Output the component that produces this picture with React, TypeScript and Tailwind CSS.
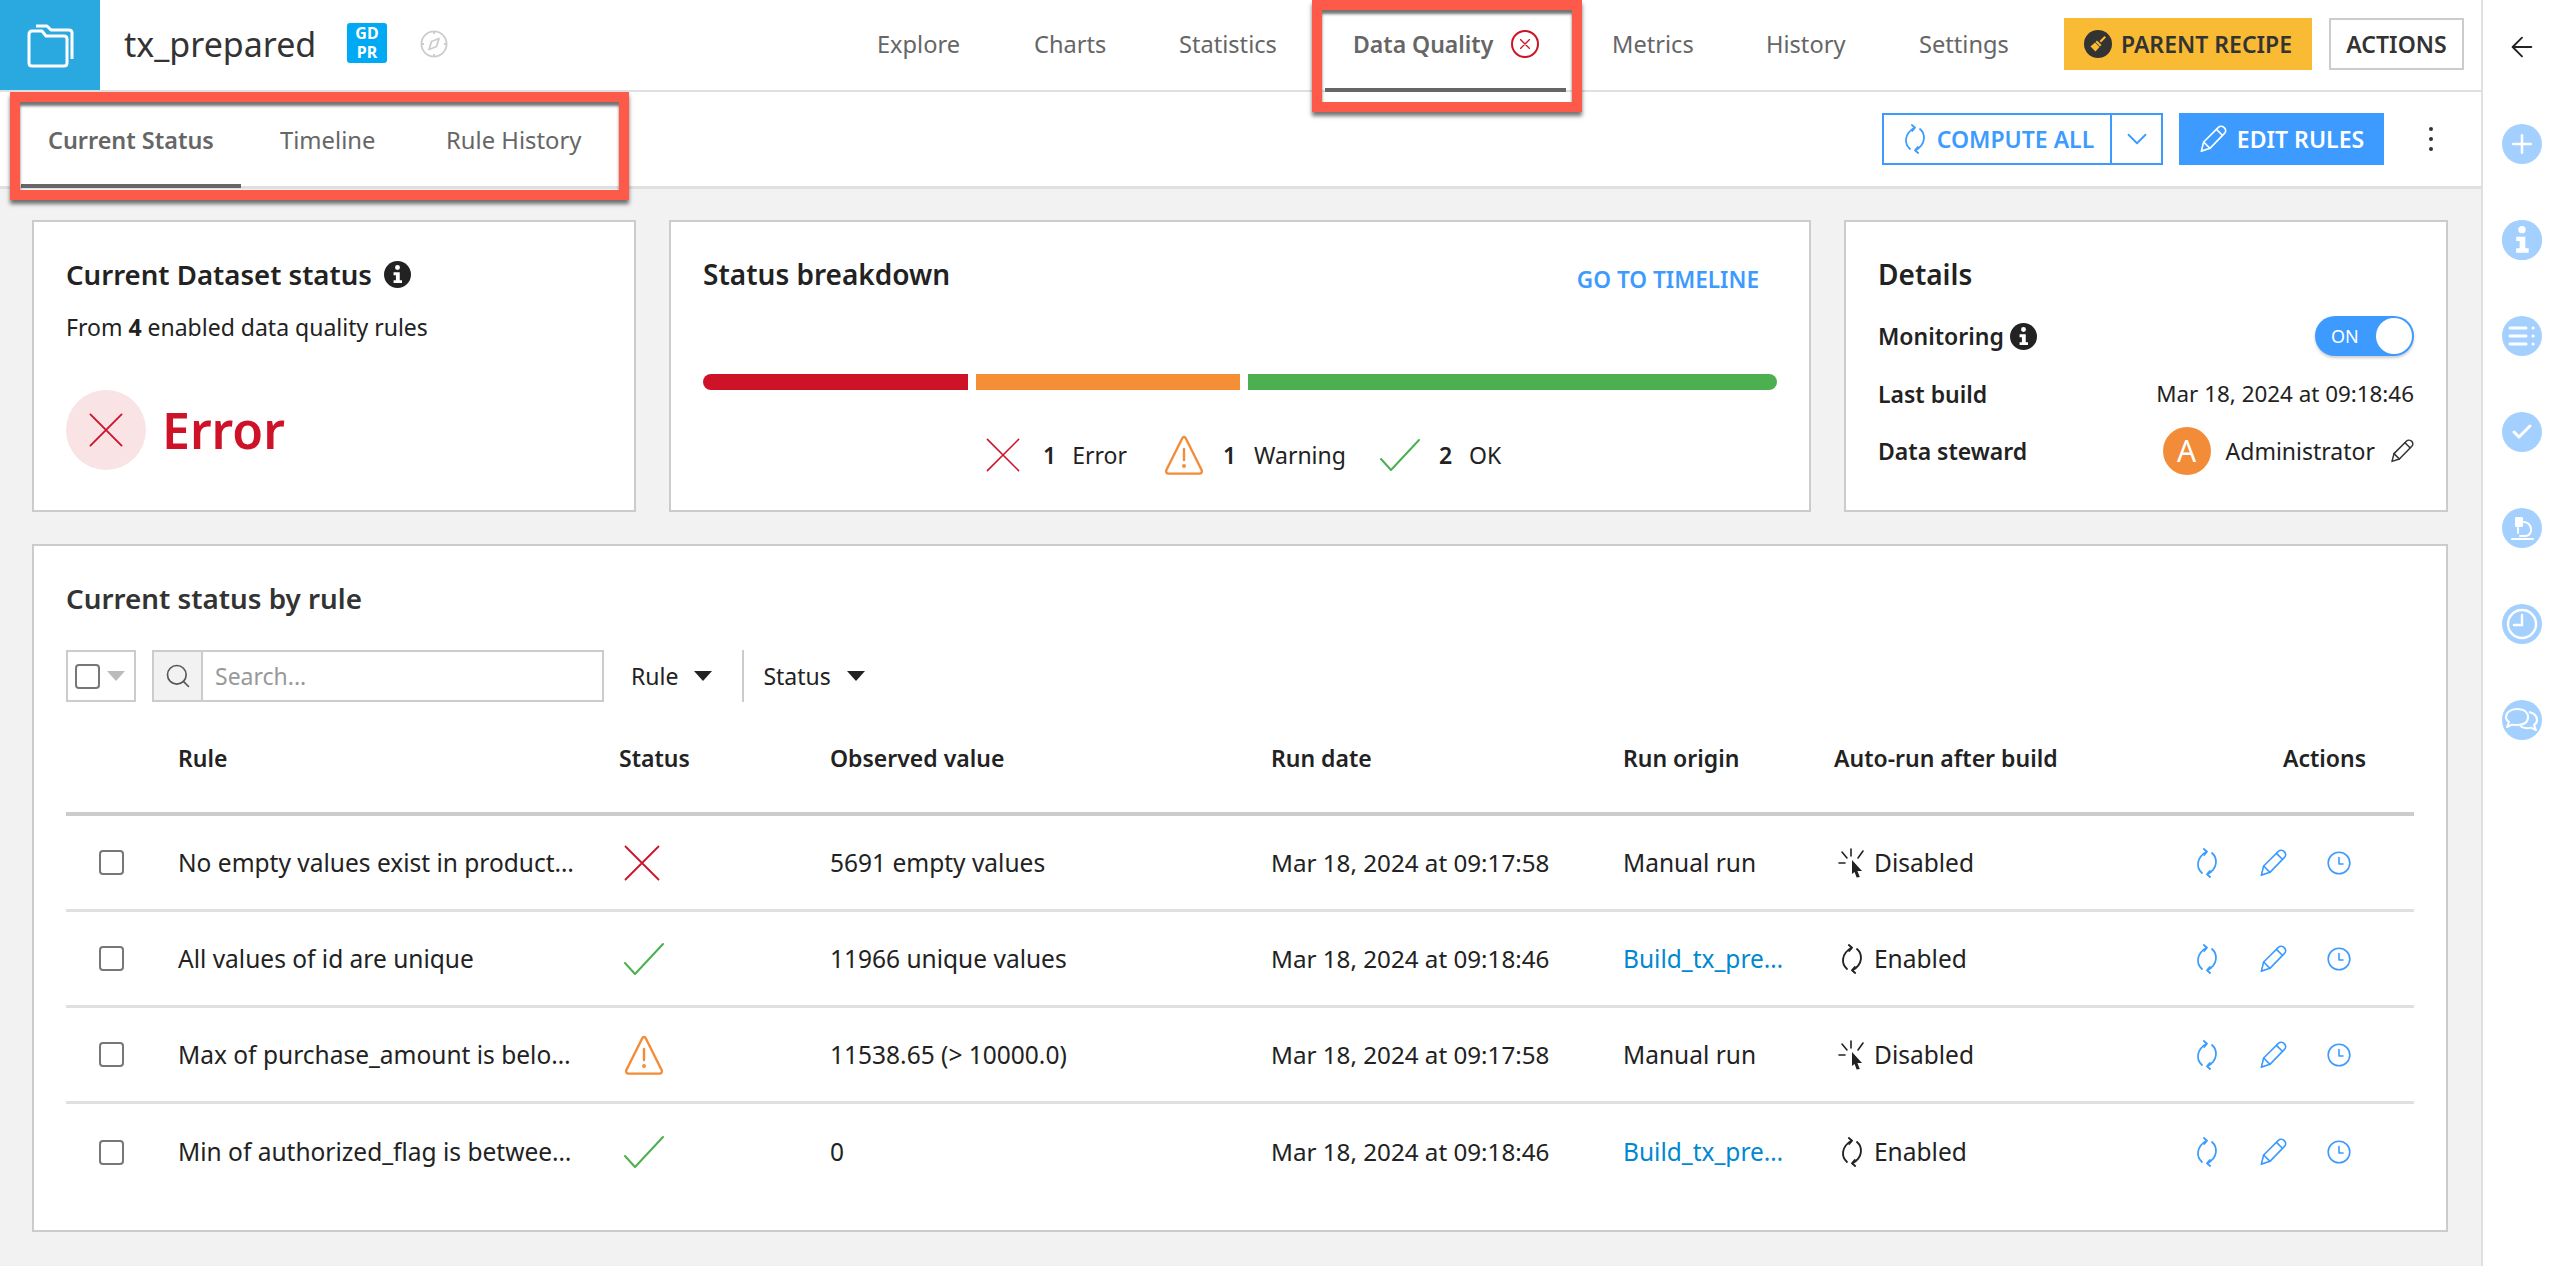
import { Plus, Check, Search, ChevronDown, ArrowLeft } from 'lucide-react';

const BLUE = '#3d9bff';

// Two arcs with arrow heads, used for compute / auto-run
function SyncIcon({ size = 32, color = BLUE, sw = 1.4 }: { size?: number; color?: string; sw?: number }) {
  return (
    <svg width={size * 0.8} height={size} viewBox="0 0 18 24" fill="none" stroke={color} strokeWidth={sw} strokeLinecap="round" strokeLinejoin="round">
      <path d="M5 20 C 0.5 16, 0 8, 8.5 3" />
      <path d="M6.5 0.8 L 9 3 L 6.8 5.6" />
      <path d="M13 4 C 17.5 8, 18 16, 9.5 21" />
      <path d="M11.5 23.2 L 9 21 L 11.2 18.4" />
    </svg>
  );
}

function PencilIcon({ size = 28, color = BLUE, sw = 1.4 }: { size?: number; color?: string; sw?: number }) {
  return (
    <svg width={size} height={size} viewBox="0 0 24 24" fill="none" stroke={color} strokeWidth={sw} strokeLinejoin="round" strokeLinecap="round">
      <path d="M2 22.4 L 4 14.6 L 16.6 2 C 18 0.8, 20.4 1, 21.8 2.4 C 23.2 3.8, 23.2 6, 21.8 7.2 L 9.4 20 Z" />
      <path d="M15 3.8 L 20 8.8" />
      <path d="M4 14.6 L 9.4 20" />
    </svg>
  );
}

function ClockIcon() {
  return (
    <svg width="24" height="24" viewBox="0 0 24 24" fill="none" stroke={BLUE} strokeWidth="1.6" strokeLinecap="round" strokeLinejoin="round">
      <circle cx="12" cy="12" r="10.8" />
      <path d="M12 6.5 V 13 H 16" />
    </svg>
  );
}

function CrossIcon({ size = 36, color = '#ce1329', sw = 1.3 }: { size?: number; color?: string; sw?: number }) {
  return (
    <svg width={size} height={size} viewBox="0 0 24 24" fill="none" stroke={color} strokeWidth={sw} strokeLinecap="round">
      <path d="M1 1 L 23 23 M 23 1 L 1 23" />
    </svg>
  );
}

function WarnIcon({ size = 40 }: { size?: number }) {
  return (
    <svg width={size} height={size} viewBox="0 0 40 40" fill="none" stroke="#f28c38" strokeWidth="2.4" strokeLinejoin="round" strokeLinecap="round">
      <path d="M20 2 C 21 2, 21.6 3, 22 3.8 L 37.6 35 C 38.4 37, 37.4 38.6, 35.4 38.6 H 4.6 C 2.6 38.6, 1.6 37, 2.4 35 L 18 3.8 C 18.4 3, 19 2, 20 2 Z" />
      <path d="M20 14 V 25" />
      <circle cx="20" cy="31" r="0.8" fill="#f28c38" />
    </svg>
  );
}

function TickIcon({ size = 40 }: { size?: number }) {
  return (
    <svg width={size} height={size} viewBox="0 0 40 40" fill="none" stroke="#4caf50" strokeWidth="2" strokeLinecap="round" strokeLinejoin="round">
      <path d="M1 24 L 11 35 L 39 5" />
    </svg>
  );
}

function InfoDot({ size = 27, bg = '#222', fg = '#fff' }: { size?: number; bg?: string; fg?: string }) {
  return (
    <svg width={size} height={size} viewBox="0 0 24 24">
      <circle cx="12" cy="12" r="12" fill={bg} />
      <circle cx="12" cy="5.8" r="2.2" fill={fg} />
      <path d="M8.5 10 H 14 V 17 H 16 V 19.6 H 8.5 V 17 H 10.6 V 12.6 H 8.5 Z" fill={fg} />
    </svg>
  );
}

function CursorClick() {
  return (
    <svg width="28" height="30" viewBox="0 0 28 30" fill="none" stroke="#222" strokeWidth="1.6" strokeLinecap="round">
      <path d="M13 1 V 8 M 4 4 L 9 10 M 25 3 L 20 10 M 1 15 H 7" />
      <path d="M14 12 L 24 23 H 19.4 L 21.8 29 L 18.6 29.6 L 16.6 24 L 14 26 Z" fill="#222" stroke="none" />
    </svg>
  );
}

function Caret({ color = '#222' }: { color?: string }) {
  return (
    <svg width="18" height="10" viewBox="0 0 18 10">
      <path d="M0 0 H 18 L 9 10 Z" fill={color} />
    </svg>
  );
}

function Checkbox() {
  return <span className="block w-[25px] h-[25px] rounded-[4px] border-2 border-[#777] bg-white" />;
}

function SideCircle({ children, mt }: { children: React.ReactNode; mt?: string }) {
  return (
    <div className={`w-10 h-10 rounded-full bg-[#a3d0ff] flex items-center justify-center text-white ${mt ?? ''}`}>
      {children}
    </div>
  );
}

const navItems = [
  { label: 'Explore', w: 'w-[157px]' },
  { label: 'Charts', w: 'w-[145px]' },
  { label: 'Statistics', w: 'w-[146px]' },
];
const navItemsRight = [
  { label: 'Metrics', w: 'w-[154px]' },
  { label: 'History', w: 'w-[153px]' },
  { label: 'Settings', w: 'w-[145px]' },
];

const rows = [
  { rule: 'No empty values exist in product…', status: 'error', value: '5691 empty values', date: 'Mar 18, 2024 at 09:17:58', origin: 'Manual run', auto: false },
  { rule: 'All values of id are unique', status: 'ok', value: '11966 unique values', date: 'Mar 18, 2024 at 09:18:46', origin: 'Build_tx_pre…', auto: true },
  { rule: 'Max of purchase_amount is belo…', status: 'warn', value: '11538.65 (> 10000.0)', date: 'Mar 18, 2024 at 09:17:58', origin: 'Manual run', auto: false },
  { rule: 'Min of authorized_flag is betwee…', status: 'ok', value: '0', date: 'Mar 18, 2024 at 09:18:46', origin: 'Build_tx_pre…', auto: true },
];

const gridCols = 'grid grid-cols-[112px_441px_211px_441px_352px_211px_1fr]';

export default function App() {
  return (
    <div className="relative flex h-screen w-full overflow-hidden bg-[#f2f2f2] font-['Noto_Sans',sans-serif] text-[#222] text-[24px] leading-[32px]">
      <div className="flex-1 min-w-0 flex flex-col">
        {/* Top bar */}
        <div className="h-[92px] shrink-0 bg-white border-b-2 border-[#e0e0e0] flex">
          <div className="w-[100px] h-[90px] bg-[#2aa9e0] flex items-center justify-center">
            <svg width="48" height="52" viewBox="0 0 48 52" fill="none" stroke="#fff" strokeWidth="3" strokeLinejoin="round">
              <path d="M3 16 C 3 13, 4 12, 6 12 H 16 L 20 17 H 38 C 40 17, 41 18, 41 20 V 44 C 41 46, 40 47, 38 47 H 6 C 4 47, 3 46, 3 44 Z" />
              <path d="M10 7 H 21 L 25 11 H 43 C 45 11, 46 12, 46 14 V 40" />
            </svg>
          </div>
          <div className="ml-[24px] w-[223px] text-[34px] leading-[88px] text-[#333]">tx_prepared</div>
          <div className="mt-[23px] w-10 h-10 rounded-[3px] bg-[#00a9f4] text-white text-[16px] leading-[19px] font-bold text-center flex flex-col justify-center">
            <span>GD</span>
            <span>PR</span>
          </div>
          <div className="ml-[33px] mt-[30px]">
            <svg width="28" height="28" viewBox="0 0 28 28" fill="none" stroke="#ccc" strokeWidth="1.8" strokeLinejoin="round">
              <circle cx="14" cy="14" r="12.6" />
              <path d="M9 19.5 L 11.5 11.5 L 19 8.5 L 16.5 16.5 Z" />
              <path d="M14 1 V 4 M 14 24 V 27 M 1 14 H 4 M 24 14 H 27" />
            </svg>
          </div>
          <div className="ml-[429px] flex text-[#666] text-[23.6px] leading-[88px]">
            {navItems.map(n => (
              <div key={n.label} className={n.w}>{n.label}</div>
            ))}
            <div className="relative w-[287px] h-[88px] pl-[28px] flex items-center font-semibold text-[23px]">
              <span>Data Quality</span>
              <span className="ml-[18px] w-[28px] h-[28px] rounded-full border-2 border-[#ce1329] flex items-center justify-center">
                <CrossIcon size={10} sw={3} />
              </span>
              <span className="absolute left-0 top-[88px] w-[241px] h-1 bg-[#666]" />
            </div>
            {navItemsRight.map(n => (
              <div key={n.label} className={n.w}>{n.label}</div>
            ))}
          </div>
          <div className="mt-[18px] w-[248px] h-[52px] bg-[#f9bb33] flex items-center justify-center gap-[9px] text-[#333] font-semibold text-[23px]">
            <span className="w-[28px] h-[28px] rounded-full bg-[#333] flex items-center justify-center">
              <svg width="18" height="18" viewBox="0 0 18 18" fill="#f9bb33">
                <path d="M10.5 6 L 15.5 1 L 17 2.5 L 12 7.5 Z" />
                <path d="M8 5.5 L 12.5 10 L 11 11.5 L 6.5 7 Z" />
                <path d="M6 7.5 L 10.5 12 L 6.5 16.5 L 1.5 11.5 Z" />
              </svg>
            </span>
            PARENT RECIPE
          </div>
          <div className="ml-[17px] mt-[18px] w-[135px] h-[52px] border-2 border-[#ccc] flex items-center justify-center font-semibold text-[23px] text-[#333]">
            ACTIONS
          </div>
        </div>

        {/* Sub tabs */}
        <div className="h-[97px] shrink-0 bg-white border-b-[3px] border-[#e0e0e0] flex">
          <div className="ml-[21px] w-[220px] h-[96px] border-b-4 border-[#666] text-[#666] font-semibold text-[23.4px] leading-[96px] pl-[27px]">
            Current Status
          </div>
          <div className="ml-[39px] w-[166px] text-[#666] text-[23.8px] leading-[96px]">Timeline</div>
          <div className="text-[#666] text-[23.8px] leading-[96px]">Rule History</div>
          <div className="ml-auto mr-[48px] mt-[21px] flex items-start">
            <div className="h-[52px] w-[281px] border-2 border-[#3d9bff] flex text-[#3d9bff] font-semibold text-[23px]">
              <div className="w-[228px] flex items-center justify-center gap-[10px] pl-[3px] border-r-2 border-[#3d9bff]">
                <SyncIcon size={30} />
                COMPUTE ALL
              </div>
              <div className="flex-1 flex items-center justify-center">
                <ChevronDown size={34} strokeWidth={1.3} />
              </div>
            </div>
            <div className="ml-[16px] h-[52px] w-[205px] bg-[#3d9bff] text-white font-semibold text-[23px] flex items-center justify-center gap-[10px]">
              <PencilIcon size={28} color="#fff" />
              EDIT RULES
            </div>
            <div className="ml-[45px] mt-[14px] flex flex-col gap-[6px]">
              <span className="block w-1 h-1 rounded-full bg-[#333]" />
              <span className="block w-1 h-1 rounded-full bg-[#333]" />
              <span className="block w-1 h-1 rounded-full bg-[#333]" />
            </div>
          </div>
        </div>

        {/* Content */}
        <div className="flex-1 min-h-0 pt-[31px] pl-[32px] pr-[33px]">
          <div className="grid grid-cols-[604px_1fr_604px] gap-[33px] h-[292px]">
            <div className="bg-white border-2 border-[#ccc] pt-[32px] pl-[32px]">
              <div className="flex items-center gap-[12px] h-10 text-[27.6px] font-semibold">
                Current Dataset status
                <InfoDot />
              </div>
              <div className="mt-[17px] leading-[32px] text-[23px]">
                From <b className="font-bold">4</b> enabled data quality rules
              </div>
              <div className="mt-[47px] flex items-center gap-[16px]">
                <div className="w-20 h-20 rounded-full bg-[#f9e3e5] flex items-center justify-center">
                  <CrossIcon size={34} sw={1.3} />
                </div>
                <span className="text-[50px] leading-[60px] font-semibold text-[#ce1329]">Error</span>
              </div>
            </div>

            <div className="bg-white border-2 border-[#ccc] pt-[32px] px-[32px]">
              <div className="flex h-10 items-center justify-between">
                <span className="text-[28px] font-semibold">Status breakdown</span>
                <span className="mt-[12px] text-[22.6px] font-semibold text-[#3d9bff] mr-[18px]">GO TO TIMELINE</span>
              </div>
              <div className="mt-[80px] flex gap-[8px] h-4">
                <div className="w-[265px] bg-[#ce1329] rounded-l-full" />
                <div className="w-[264px] bg-[#f58e36]" />
                <div className="flex-1 bg-[#4caf50] rounded-r-full" />
              </div>
              <div className="mt-[45px] h-10 flex items-center pl-[283px] text-[23px]">
                <CrossIcon size={34} sw={1.1} />
                <b className="ml-[23px] font-semibold">1</b>
                <span className="ml-[16px]">Error</span>
                <span className="ml-[37px]"><WarnIcon /></span>
                <b className="ml-[19px] font-semibold">1</b>
                <span className="ml-[18px]">Warning</span>
                <span className="ml-[34px]"><TickIcon /></span>
                <b className="ml-[19px] font-semibold">2</b>
                <span className="ml-[17px]">OK</span>
              </div>
            </div>

            <div className="bg-white border-2 border-[#ccc] pt-[32px] px-[32px]">
              <div className="h-10 flex items-center text-[28px] font-semibold">Details</div>
              <div className="mt-[22px] h-10 flex items-center justify-between">
                <span className="flex items-center gap-[6px] font-semibold text-[23px]">
                  Monitoring
                  <InfoDot />
                </span>
                <span className="relative w-[99px] h-10 rounded-full bg-[#3d9bff] text-white text-[18px] leading-10 pl-[16px] shadow-[0_2px_3px_rgba(0,0,0,0.2)]">
                  ON
                  <span className="absolute right-[2px] top-[2px] w-9 h-9 rounded-full bg-white" />
                </span>
              </div>
              <div className="mt-[18px] h-10 flex items-center justify-between text-[22.4px]">
                <span className="font-semibold text-[23px]">Last build</span>
                <span>Mar 18, 2024 at 09:18:46</span>
              </div>
              <div className="mt-[13px] h-12 flex items-center text-[23px]">
                <span className="font-semibold">Data steward</span>
                <span className="ml-auto w-12 h-12 rounded-full bg-[#f28c38] text-white text-[30px] flex items-center justify-center">A</span>
                <span className="ml-[15px]">Administrator</span>
                <span className="ml-[15px]"><PencilIcon size={24} color="#333" sw={1.5} /></span>
              </div>
            </div>
          </div>

          {/* Rules table */}
          <div className="mt-[32px] h-[688px] bg-white border-2 border-[#ccc] pt-[32px] px-[32px]">
            <div className="h-10 flex items-center text-[27.8px] font-semibold text-[#333]">Current status by rule</div>
            <div className="mt-[32px] h-[52px] flex items-center text-[23px]">
              <div className="w-[70px] h-[52px] border-2 border-[#ccc] flex items-center pl-[7px] gap-[7px]">
                <Checkbox />
                <Caret color="#bbb" />
              </div>
              <div className="ml-[16px] w-[452px] h-[52px] border-2 border-[#ccc] flex items-center">
                <div className="w-[49px] h-full bg-[#f2f2f2] border-r-2 border-[#ccc] flex items-center justify-center">
                  <Search size={28} strokeWidth={1.4} className="text-[#555]" />
                </div>
                <span className="ml-[12px] text-[#999]">Search...</span>
              </div>
              <span className="ml-[27px]">Rule</span>
              <span className="ml-[16px]"><Caret /></span>
              <span className="ml-[30px] w-[2px] h-[52px] bg-[#ccc]" />
              <span className="ml-[19px]">Status</span>
              <span className="ml-[16px]"><Caret /></span>
            </div>

            <div className={`${gridCols} mt-[36px] h-[78px] border-b-4 border-[#ccc] text-[23px] leading-10 font-semibold`}>
              <div />
              <div>Rule</div>
              <div>Status</div>
              <div>Observed value</div>
              <div>Run date</div>
              <div>Run origin</div>
              <div className="flex justify-between pr-[48px]">
                <span>Auto-run after build</span>
                <span>Actions</span>
              </div>
            </div>

            {rows.map((r, i) => (
              <div key={i} className={`${gridCols} h-[96px] items-center text-[24.5px] ${i < rows.length - 1 ? 'border-b-[3px] border-[#e0e0e0]' : ''}`}>
                <div className="pl-[33px]"><Checkbox /></div>
                <div className="whitespace-nowrap">{r.rule}</div>
                <div className="pl-[5px]">
                  {r.status === 'error' && <CrossIcon size={36} sw={1.2} />}
                  {r.status === 'ok' && <TickIcon />}
                  {r.status === 'warn' && <WarnIcon />}
                </div>
                <div>{r.value}</div>
                <div className="text-[24.2px]">{r.date}</div>
                <div className={r.origin === 'Manual run' ? '' : 'text-[#0088d1]'}>{r.origin}</div>
                <div className="flex items-center">
                  <span className="ml-[4px] w-[28px] flex justify-center">
                    {r.auto ? <SyncIcon size={30} color="#222" sw={1.5} /> : <CursorClick />}
                  </span>
                  <span className="ml-[8px]">{r.auto ? 'Enabled' : 'Disabled'}</span>
                  <div className="ml-auto mr-[63px] flex items-center">
                    <SyncIcon size={30} />
                    <span className="ml-[40px]"><PencilIcon size={28} /></span>
                    <span className="ml-[40px]"><ClockIcon /></span>
                  </div>
                </div>
              </div>
            ))}
          </div>
        </div>
      </div>

      {/* Right rail */}
      <div className="w-[79px] shrink-0 bg-white border-l-2 border-[#e0e0e0] flex flex-col items-center pt-[31px]">
        <ArrowLeft size={32} strokeWidth={1.4} className="text-[#222]" />
        <SideCircle mt="mt-[61px]"><Plus size={30} strokeWidth={2} /></SideCircle>
        <SideCircle mt="mt-[56px]"><InfoDot size={40} bg="#a3d0ff" /></SideCircle>
        <SideCircle mt="mt-[56px]">
          <svg width="28" height="22" viewBox="0 0 28 22" fill="none" stroke="#fff" strokeWidth="3" strokeLinecap="round">
            <path d="M2 3 H 18 M 2 11 H 18 M 2 19 H 18 M 25 3 H 25.2 M 25 11 H 25.2 M 25 19 H 25.2" />
          </svg>
        </SideCircle>
        <SideCircle mt="mt-[56px]"><Check size={24} strokeWidth={3} /></SideCircle>
        <SideCircle mt="mt-[56px]">
          <svg width="28" height="28" viewBox="0 0 28 28" fill="none" stroke="#fff" strokeWidth="2" strokeLinecap="round">
            <rect x="7" y="3" width="8" height="10" rx="1" fill="#fff" stroke="none" />
            <path d="M16 8 C 24 9, 26 20, 18 22 H 12" />
            <path d="M4 25 H 25" />
            <path d="M10 14 V 19" />
          </svg>
        </SideCircle>
        <SideCircle mt="mt-[56px]">
          <svg width="36" height="36" viewBox="0 0 36 36" fill="none" stroke="#fff" strokeWidth="2.4" strokeLinecap="round">
            <circle cx="18" cy="18" r="14" />
            <path d="M18 9 V 19 H 10" />
          </svg>
        </SideCircle>
        <SideCircle mt="mt-[56px]">
          <svg width="34" height="28" viewBox="0 0 34 28" fill="none" stroke="#fff" strokeWidth="2" strokeLinejoin="round">
            <path d="M12 3 C 20 3, 23 7, 23 11 C 23 16, 19 19, 12 19 C 10 19, 8 19, 7 18.6 L 2 21 L 4 16 C 2 15, 1 13, 1 11 C 1 7, 5 3, 12 3 Z" />
            <path d="M24 6 C 29 7, 32 10, 32 14 C 32 16, 31 18, 29 19 L 31 24 L 26 21.6 C 22 23, 18 22, 15 20" />
          </svg>
        </SideCircle>
      </div>

      {/* Annotation frames drawn over the screenshot */}
      <div className="absolute left-[1312px] top-0 w-[270px] h-[112px] border-[10px] border-[#fe5a4a] shadow-[0_4px_4px_rgba(0,0,0,0.55),inset_0_4px_3px_rgba(0,0,0,0.55)] pointer-events-none" />
      <div className="absolute left-[10px] top-[92px] w-[619px] h-[108px] border-[10px] border-[#fe5a4a] shadow-[0_4px_4px_rgba(0,0,0,0.55),inset_0_4px_3px_rgba(0,0,0,0.55)] pointer-events-none" />
    </div>
  );
}
